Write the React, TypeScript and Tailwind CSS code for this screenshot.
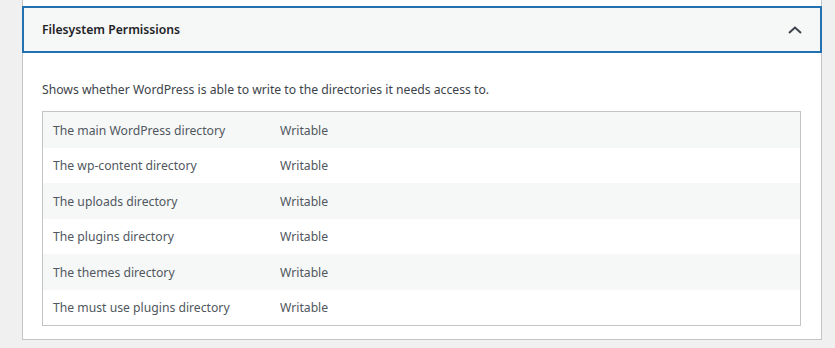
const rows = [
  "The main WordPress directory",
  "The wp-content directory",
  "The uploads directory",
  "The plugins directory",
  "The themes directory",
  "The must use plugins directory",
];

export default function App() {
  return (
    <div className="h-[348px] w-full overflow-hidden bg-[#f0f0f1] pl-[22px] font-['Segoe_UI','Noto_Sans',sans-serif] text-[12.2px]">
      <div className="w-[800px] border-x border-b border-[#c3c4c7] bg-white">
        <div className="h-[6px]" />
        {/* accordion header, focused */}
        <div className="-mx-px flex h-[47px] items-center justify-between border-2 border-[#2271b1] bg-[#f6f7f7] pt-[2px] pl-[18px] pr-[17px]">
          <span className="font-semibold text-[#1d2327]">Filesystem Permissions</span>
          <svg width="16" height="10" viewBox="0 0 16 10" className="mt-[-2px]">
            <polyline points="2,8 8,2.5 14,8" fill="none" stroke="#3c434a" strokeWidth="2" />
          </svg>
        </div>
        <div className="px-[19px] pb-[13px]">
          <p className="mt-[28px] mb-[12px] leading-[18px] text-[#3c434a]">
            Shows whether WordPress is able to write to the directories it needs access to.
          </p>
          <div className="w-[759px] border border-[#c3c4c7]">
            {rows.map((r, i) => (
              <div
                key={r}
                className={`flex h-[35.5px] items-center pt-[2px] text-[#50575e] ${i % 2 === 0 ? "bg-[#f6f7f7]" : "bg-white"}`}
              >
                <span className="w-[237px] pl-[10px]">{r}</span>
                <span>Writable</span>
              </div>
            ))}
          </div>
        </div>
      </div>
    </div>
  );
}
